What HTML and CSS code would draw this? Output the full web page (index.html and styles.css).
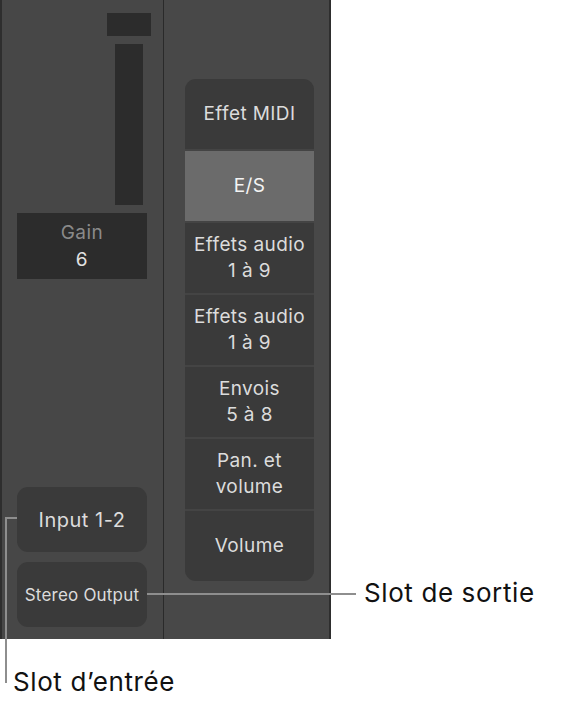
FILE: index.html
```html
<!DOCTYPE html>
<html>
<head>
<meta charset="utf-8">
<link rel="stylesheet" href="styles.css">
</head>
<body>
<div class="figure">
  <div class="strip">
    <div class="col-left">
      <div class="peak"></div>
      <div class="meter"></div>
      <div class="gain">
        <span class="gain-label">Gain</span>
        <span class="gain-value">6</span>
      </div>
      <div class="spacer"></div>
      <div class="io-slot input">Input 1-2</div>
      <div class="io-slot output">Stereo Output</div>
    </div>
    <div class="col-right">
      <div class="slots">
        <div class="slot">Effet MIDI</div>
        <div class="slot active">E/S</div>
        <div class="slot">Effets audio<br>1 à 9</div>
        <div class="slot">Effets audio<br>1 à 9</div>
        <div class="slot">Envois<br>5 à 8</div>
        <div class="slot">Pan. et<br>volume</div>
        <div class="slot">Volume</div>
      </div>
    </div>
  </div>
  <div class="line out-h"></div>
  <div class="callout out-label">Slot de sortie</div>
  <div class="line in-h"></div>
  <div class="line in-v"></div>
  <div class="callout in-label">Slot d’entrée</div>
</div>
</body>
</html>
```

FILE: styles.css
```css
html, body {
  margin: 0;
  padding: 0;
  background: #ffffff;
}
body {
  font-family: Inter, "Liberation Sans", sans-serif;
}
.figure {
  position: relative;
  width: 577px;
  height: 702px;
}
.strip {
  display: flex;
  width: 331px;
  height: 639px;
  box-sizing: border-box;
  border-left: 2px solid #2e2e2e;
  border-right: 2px solid #2e2e2e;
  background: #484848;
}
.col-left {
  width: 161px;
  border-right: 1px solid #2a2a2a;
  display: flex;
  flex-direction: column;
  background: #474747;
}
.peak {
  margin: 13px 0 0 105px;
  width: 44px;
  height: 23px;
  background: #2c2c2c;
}
.meter {
  margin: 8px 0 0 113px;
  width: 28px;
  height: 161px;
  background: #2c2c2c;
}
.gain {
  margin: 8px 0 0 15px;
  width: 130px;
  height: 66px;
  background: #2c2c2c;
  display: flex;
  flex-direction: column;
  align-items: center;
  justify-content: center;
  font-size: 19px;
  line-height: 27px;
  letter-spacing: 0.5px;
}
.gain-label { color: #8a8a8a; }
.gain-value { color: #e2e2e2; }
.spacer { flex: 1; }
.io-slot {
  margin-left: 15px;
  width: 130px;
  height: 65px;
  border-radius: 11px;
  background: #3a3a3a;
  color: #dcdcdc;
  display: flex;
  align-items: center;
  justify-content: center;
  white-space: nowrap;
}
.input {
  font-size: 20px;
  letter-spacing: 0.5px;
  margin-bottom: 10px;
}
.output {
  font-size: 17px;
  letter-spacing: 0.2px;
  margin-bottom: 12px;
}
.col-right {
  flex: 1;
  padding: 79px 0 0 21px;
}
.slots {
  width: 129px;
  border-radius: 11px;
  overflow: hidden;
  background: #444444;
  display: flex;
  flex-direction: column;
  gap: 2px;
}
.slot {
  height: 70px;
  background: #3a3a3a;
  color: #dcdcdc;
  font-size: 19px;
  line-height: 26px;
  letter-spacing: 0.4px;
  display: flex;
  align-items: center;
  justify-content: center;
  text-align: center;
}
.slot.active {
  background: #6b6b6b;
  color: #f4f4f4;
}
.line {
  position: absolute;
  background: #8e8e8e;
}
.out-h {
  left: 147px;
  top: 593px;
  width: 209px;
  height: 2px;
}
.in-h {
  left: 5px;
  top: 517px;
  width: 12px;
  height: 2px;
}
.in-v {
  left: 5px;
  top: 517px;
  width: 2px;
  height: 166px;
}
.callout {
  position: absolute;
  color: #111111;
  font-size: 26px;
  line-height: 30px;
  letter-spacing: 0.6px;
  white-space: nowrap;
}
.out-label {
  left: 364px;
  top: 578px;
}
.in-label {
  left: 13px;
  top: 667px;
}
```
